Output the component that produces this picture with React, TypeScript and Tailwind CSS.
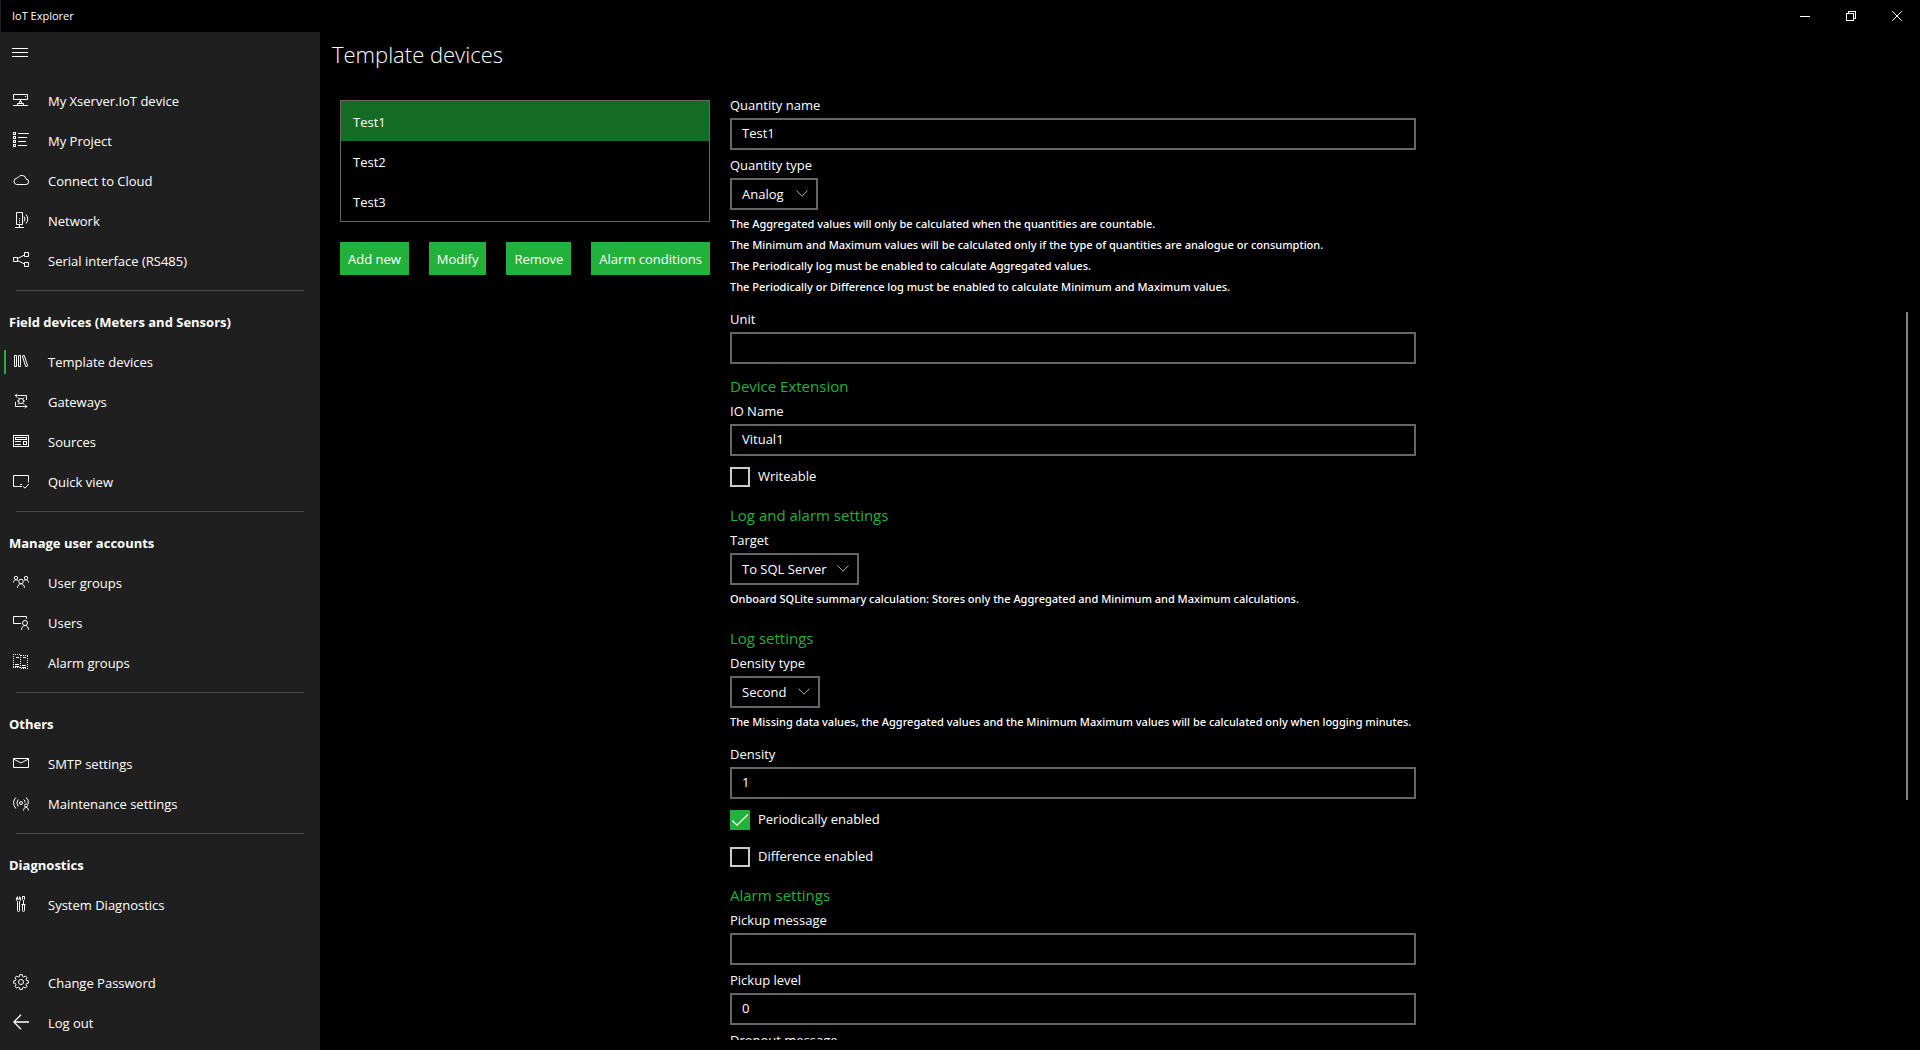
import { useState } from 'react';
import type { ReactNode } from 'react';

function Icon({ children, crisp = false }: { children: ReactNode; crisp?: boolean }) {
  return (
    <svg
      viewBox="0 0 16 16"
      className="mb-0.5 size-4 shrink-0"
      fill="none"
      stroke="currentColor"
      strokeWidth={1}
      shapeRendering={crisp ? 'crispEdges' : 'auto'}
      aria-hidden="true"
    >
      {children}
    </svg>
  );
}

const icons = {
  device: (
    <Icon>
      <path d="M.5 2.5h14v5H.5zM12 4.5h1M0 13.5h5M10 13.5h5M7.5 7.5v2M6.5 9.5h2v2M6.5 9.5v2M4.5 13.5v-2h6v2z" />
    </Icon>
  ),
  project: (
    <Icon crisp>
      <path d="M.5.5h2v2h-2zM.5 4.5h2v2h-2zM.5 8.5h2v2h-2zM.5 12.5h2v2h-2zM5 1.5h11M5 5.5h9M5 9.5h8M5 13.5h9" />
    </Icon>
  ),
  cloud: (
    <Icon>
      <path d="M3.5 12.5h9.300a2.700 2.700 0 0 0 .3-5.400A4.300 4.300 0 0 0 5 5.700a2 2 0 0 0-1.200.500A3.200 3.200 0 0 0 3.500 12.500z" />
    </Icon>
  ),
  network: (
    <Icon>
      <path d="M3.500.500h6v12h-6zM6.500 13v2.500M2 15.500h9" />
      <path d="M6.500 6v1M6.500 8v1M6.500 10v1M11 4.500q2 2.500 0 5M13 2.500q3.500 4.500 0 9" />
    </Icon>
  ),
  serial: (
    <Icon>
      <path d="M.5 5.500h4v4h-4zM11.500.500h4v4h-4zM11.500 10.500h4v4h-4zM4.500 6.500l7-3.500M4.500 8.500l7 3.500" />
    </Icon>
  ),
  template: (
    <Icon>
      <path d="M1.500 2.500h2v11h-2zM5.500 2.500h2v11h-2zM9.300 3l2-.500 3.400 10.500-2 .600z" />
    </Icon>
  ),
  gateway: (
    <Icon>
      <path d="M2 2.500h11.500V7M4 .700L2.200 2.500 4 4.300M14 13.500H2.500V9M12 11.700l1.800 1.800-1.800 1.800" />
      <circle cx="8" cy="8" r="2.500" />
      <path d="M5 4.500l1.300 1.500M11 4.500L9.700 6M5 11.500L6.300 10M11 11.500L9.700 10M4 8h1.500M10.500 8H12" />
    </Icon>
  ),
  sources: (
    <Icon crisp>
      <path d="M.5 2.500h15v11H.5zM2.500 4.500h11v2h-11zM2 8.500h6M2 11.500h6M10.500 8.500h3v3h-3z" />
    </Icon>
  ),
  quick: (
    <Icon>
      <path d="M9 13.500H.5v-11h15v7M7 11.500h2M10 13.200l2 2 3.800-4.200" />
    </Icon>
  ),
  groups: (
    <Icon>
      <circle cx="3" cy="4" r="1.700" />
      <circle cx="13" cy="4" r="1.700" />
      <circle cx="8" cy="7.500" r="2.300" />
      <path d="M.5 8.500C.5 7 1.500 5.700 3 5.700c.8 0 1.500.3 2 .800M15.500 8.500c0-1.500-1-2.800-2.500-2.800-.8 0-1.500.3-2 .800M4.500 13.800c0-2.300 1.600-4 3.500-4s3.500 1.700 3.500 4" />
    </Icon>
  ),
  users: (
    <Icon>
      <path d="M8 9.500H.5v-7h13V5" />
      <circle cx="12" cy="9" r="2.500" />
      <path d="M8.500 15.800c0-2.500 1.500-4.300 3.500-4.300s3.500 1.800 3.500 4.300" />
    </Icon>
  ),
  alarms: (
    <Icon crisp>
      <path strokeDasharray="1 1" d="M0 .5h7M.5 0v14M0 13.500h7M7.500 1v14M8 1.500h7M14.500 2v13M8 14.500h7" />
      <path d="M3 3.500h3M2 10.500h4M2 12.500h4M10 3.500h3M9 11.500h4M9 13.500h4" />
    </Icon>
  ),
  mail: (
    <Icon>
      <path d="M.5 3.500h15v9H.5zM.5 4L8 8l7.500-4" />
    </Icon>
  ),
  maintenance: (
    <Icon>
      <circle cx="8" cy="8" r="1.500" />
      <path d="M2.800 2.500q-4.500 5 0 11M5.200 4.500q-2.700 3.300 0 7M13.200 2.500q2.800 2.700 2.100 6.500M10.800 4.500q1.400 1.500 1.300 3" />
      <circle cx="13" cy="10.500" r="1.500" />
      <path d="M10.500 15.500c.2-2 1.200-3.300 2.500-3.300s2.300 1.300 2.500 3.300" />
    </Icon>
  ),
  tools: (
    <Icon>
      <path d="M4.500 5.500v9q0 1 1 1t1-1v-9M4.500.700C3 2 3 4.500 4.500 5.500M6.500.700C8 2 8 4.500 6.500 5.500M4.500.700v2.500h2V.700" />
      <path d="M9.500.500h2v3l-1 1-1-1zM10.500 4.500V9M8.500 8.500h4M9.500 9v5.500q0 1 1 1t1-1V9" />
    </Icon>
  ),
  gear: (
    <Icon>
      <circle cx="8" cy="8" r="2.500" />
      <path d="M6.800.6h2.400l.4 1.900 1.100.5 1.700-1 1.600 1.700-1 1.600.5 1.200 1.900.4v2.300l-1.900.4-.5 1.200 1 1.600-1.600 1.700-1.700-1-1.100.5-.4 1.900H6.800l-.4-1.900-1.100-.5-1.700 1L2 12.400l1-1.600-.5-1.200-1.900-.4V6.900l1.900-.4.5-1.200-1-1.600L3.600 2l1.700 1 1.100-.5z" />
    </Icon>
  ),
  back: (
    <Icon>
      <path d="M16 8H.8M8 .800L.8 8 8 15.200" strokeWidth={1.300} />
    </Icon>
  ),
};

type Item = { label: string; icon: keyof typeof icons; active?: boolean };

const sections: { title?: string; items: Item[] }[] = [
  {
    items: [
      { label: 'My Xserver.IoT device', icon: 'device' },
      { label: 'My Project', icon: 'project' },
      { label: 'Connect to Cloud', icon: 'cloud' },
      { label: 'Network', icon: 'network' },
      { label: 'Serial interface (RS485)', icon: 'serial' },
    ],
  },
  {
    title: 'Field devices (Meters and Sensors)',
    items: [
      { label: 'Template devices', icon: 'template', active: true },
      { label: 'Gateways', icon: 'gateway' },
      { label: 'Sources', icon: 'sources' },
      { label: 'Quick view', icon: 'quick' },
    ],
  },
  {
    title: 'Manage user accounts',
    items: [
      { label: 'User groups', icon: 'groups' },
      { label: 'Users', icon: 'users' },
      { label: 'Alarm groups', icon: 'alarms' },
    ],
  },
  {
    title: 'Others',
    items: [
      { label: 'SMTP settings', icon: 'mail' },
      { label: 'Maintenance settings', icon: 'maintenance' },
    ],
  },
  { title: 'Diagnostics', items: [{ label: 'System Diagnostics', icon: 'tools' }] },
];

const footer: Item[] = [
  { label: 'Change Password', icon: 'gear' },
  { label: 'Log out', icon: 'back' },
];

function NavItem({ item }: { item: Item }) {
  return (
    <a
      href="#"
      aria-current={item.active ? 'page' : undefined}
      className="flex h-10 items-center pl-1 hover:bg-[#2f2f2f]"
    >
      <span className={item.active ? 'mr-[7px] h-6 w-0.5 bg-[#22b13a]' : 'mr-[7px] h-6 w-0.5'} />
      {icons[item.icon]}
      <span className="ml-[19px]">{item.label}</span>
    </a>
  );
}

function Sidebar() {
  return (
    <nav className="flex w-80 shrink-0 flex-col bg-[#1f1f1f] pb-[7px]">
      <button type="button" aria-label="Menu" className="mb-[9px] flex h-10 w-10 items-center justify-center">
        <svg viewBox="0 0 16 9" className="h-[9px] w-4" shapeRendering="crispEdges" stroke="currentColor">
          <path d="M0 .5h16M0 4.500h16M0 8.500h16" />
        </svg>
      </button>
      {sections.map((s, i) => (
        <div key={i}>
          {i > 0 && <hr className="mx-4 mt-[9px] mb-[11px] border-[#4b4b4b]" />}
          {s.title && <h2 className="flex h-10 items-center pl-[9px] font-bold">{s.title}</h2>}
          {s.items.map((it) => (
            <NavItem key={it.label} item={it} />
          ))}
        </div>
      ))}
      <div className="mt-auto">
        {footer.map((it) => (
          <NavItem key={it.label} item={it} />
        ))}
      </div>
    </nav>
  );
}

function TextField({ id, label, value = '' }: { id: string; label: string; value?: string }) {
  return (
    <div>
      <label htmlFor={id} className="flex h-7 items-center pt-0.5">
        {label}
      </label>
      <input
        id={id}
        type="text"
        defaultValue={value}
        className="block h-8 w-full border-2 border-[#666] bg-black px-2.5 pb-0.5 outline-none"
      />
    </div>
  );
}

function SelectField({ id, label, value, width }: { id: string; label: string; value: string; width: string }) {
  return (
    <div>
      <label htmlFor={id} className="flex h-7 items-center pt-0.5">
        {label}
      </label>
      <div className={`relative ${width}`}>
        <select
          id={id}
          defaultValue={value}
          className="block h-8 w-full appearance-none border-2 border-[#666] bg-black pl-2.5 outline-none"
        >
          <option>{value}</option>
        </select>
        <svg
          viewBox="0 0 12 7"
          className="pointer-events-none absolute top-3 right-2.5 h-[7px] w-3"
          fill="none"
          stroke="#b0b0b0"
        >
          <path d="M.4.500L6 6.200 11.600.500" />
        </svg>
      </div>
    </div>
  );
}

function CheckField({ id, label, initial = false }: { id: string; label: string; initial?: boolean }) {
  const [on, setOn] = useState(initial);
  return (
    <div className="flex h-[37px] items-center pt-[11px] pb-1.5">
      <span className="relative mr-2 size-5">
        <input
          id={id}
          type="checkbox"
          checked={on}
          onChange={() => setOn(!on)}
          className="block size-5 appearance-none border-2 border-[#ccc] checked:border-[#22b13a] checked:bg-[#22b13a]"
        />
        {on && (
          <svg
            viewBox="0 0 20 20"
            className="pointer-events-none absolute inset-0 size-5"
            fill="none"
            stroke="white"
            strokeWidth={1.300}
          >
            <path d="M2.300 10.500L7 15.200 17.800 4.500" />
          </svg>
        )}
      </span>
      <label htmlFor={id} className="pb-0.5">
        {label}
      </label>
    </div>
  );
}

function Heading({ children }: { children: ReactNode }) {
  return <h2 className="mt-3 flex h-5 items-center text-[15px] text-[#22b13a]">{children}</h2>;
}

function Hints({ lines }: { lines: string[] }) {
  return (
    <div className="pt-[3px] pb-[7px] font-['Noto_Sans',sans-serif] text-[11px] leading-[21px] font-medium">
      {lines.map((l) => (
        <p key={l} className="whitespace-nowrap">
          {l}
        </p>
      ))}
    </div>
  );
}

const devices = ['Test1', 'Test2', 'Test3'];
const actions = ['Add new', 'Modify', 'Remove', 'Alarm conditions'];

export default function App() {
  return (
    <div className="flex h-screen flex-col overflow-hidden bg-black font-['Open_Sans','Noto_Sans',sans-serif] text-[13px] leading-5 text-white">
      <header className="flex h-8 shrink-0 items-center justify-between border-l border-[#1f1f1f] pl-[11px]">
        <span className="text-[11px]">IoT Explorer</span>
        <div className="flex h-full">
          <button type="button" aria-label="Minimize" className="flex w-[46px] items-center justify-center">
            <svg viewBox="0 0 10 10" className="size-2.5" stroke="white" shapeRendering="crispEdges">
              <path d="M0 5.500h10" />
            </svg>
          </button>
          <button type="button" aria-label="Restore" className="flex w-[46px] items-center justify-center">
            <svg viewBox="0 0 10 10" className="size-2.5" stroke="white" fill="none" shapeRendering="crispEdges">
              <path d="M.5 2.500h7v7h-7zM2.500 2.500v-2h7v7h-2" />
            </svg>
          </button>
          <button type="button" aria-label="Close" className="flex w-[46px] items-center justify-center">
            <svg viewBox="0 0 10 10" className="size-2.5" stroke="white">
              <path d="M.2.200l9.600 9.600M9.800.200L.2 9.800" />
            </svg>
          </button>
        </div>
      </header>

      <div className="flex min-h-0 flex-1">
        <Sidebar />
        <main className="flex min-w-0 flex-1 flex-col pb-2.5">
          <h1 className="flex h-11 shrink-0 items-center pl-3 text-[22px] font-light">Template devices</h1>
          <div className="flex min-h-0 flex-1 gap-5 pl-5">
            <section className="w-[370px] shrink-0 pt-6">
              <ul role="listbox" aria-label="Template devices" className="border border-[#666]">
                {devices.map((d, i) => (
                  <li
                    key={d}
                    role="option"
                    aria-selected={i === 0}
                    className={
                      i === 0
                        ? 'flex h-10 items-center bg-[#146b23] pt-0.5 pl-3'
                        : 'flex h-10 items-center pt-0.5 pl-3'
                    }
                  >
                    {d}
                  </li>
                ))}
              </ul>
              <div className="mt-5 flex justify-between">
                {actions.map((a) => (
                  <button key={a} type="button" className="h-[33px] bg-[#22b13a] px-2">
                    {a}
                  </button>
                ))}
              </div>
            </section>

            <form className="min-w-0 max-w-[686px] flex-1 overflow-hidden pt-3.5">
              <TextField id="quantity-name" label="Quantity name" value="Test1" />
              <SelectField id="quantity-type" label="Quantity type" value="Analog" width="w-[88px]" />
              <Hints
                lines={[
                  'The Aggregated values will only be calculated when the quantities are countable.',
                  'The Minimum and Maximum values will be calculated only if the type of quantities are analogue or consumption.',
                  'The Periodically log must be enabled to calculate Aggregated values.',
                  'The Periodically or Difference log must be enabled to calculate Minimum and Maximum values.',
                ]}
              />
              <TextField id="unit" label="Unit" />

              <Heading>Device Extension</Heading>
              <TextField id="io-name" label="IO Name" value="Vitual1" />
              <CheckField id="writeable" label="Writeable" />

              <Heading>Log and alarm settings</Heading>
              <SelectField id="target" label="Target" value="To SQL Server" width="w-[129px]" />
              <Hints
                lines={[
                  'Onboard SQLite summary calculation: Stores only the Aggregated and Minimum and Maximum calculations.',
                ]}
              />

              <Heading>Log settings</Heading>
              <SelectField id="density-type" label="Density type" value="Second" width="w-[90px]" />
              <Hints
                lines={[
                  'The Missing data values, the Aggregated values and the Minimum Maximum values will be calculated only when logging minutes.',
                ]}
              />
              <TextField id="density" label="Density" value="1" />
              <CheckField id="periodically" label="Periodically enabled" initial />
              <CheckField id="difference" label="Difference enabled" />

              <Heading>Alarm settings</Heading>
              <TextField id="pickup-message" label="Pickup message" />
              <TextField id="pickup-level" label="Pickup level" value="0" />
              <TextField id="dropout-message" label="Dropout message" />
            </form>

            <div className="ml-auto pt-[236px] pr-3" aria-hidden="true">
              <div className="h-[67%] w-0.5 bg-[#868686]" />
            </div>
          </div>
        </main>
      </div>
    </div>
  );
}
